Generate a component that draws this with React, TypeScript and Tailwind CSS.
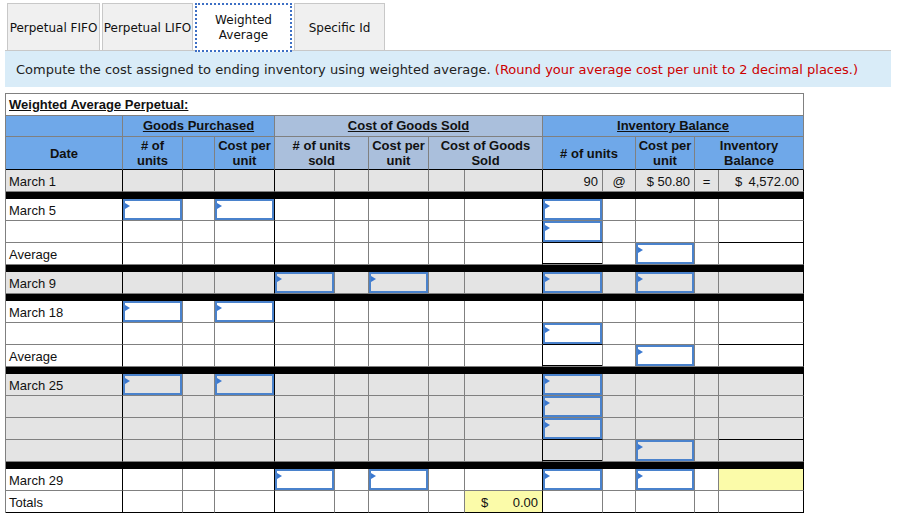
import React from 'react';

// column widths of the worksheet grid (first one sits right of the outer left border)
const widths = [117, 60, 32, 60, 60, 34, 60, 36, 78, 60, 33, 59, 24, 85];

type Spec = {
  label?: string;
  gray?: boolean;
  inputs?: number[];
  preAvg?: boolean;
  avg?: boolean;
  yellow?: number[];
  content?: Record<number, React.ReactNode>;
  last?: boolean;
};

const rightBorder = (i: number) =>
  i === 0 || i === 3 || i === 8 || i === 13 ? 'border-r-black' : 'border-r-[#808080]';

const InputBox = ({ gray }: { gray?: boolean }) => (
  <div className={`relative h-[21px] w-full border-2 border-[#4a82cc] ${gray ? 'bg-[#e4e4e4]' : 'bg-white'}`}>
    <span className="absolute left-0 top-[2px] h-0 w-0 border-y-[3px] border-y-transparent border-l-[5px] border-l-[#3a78d0]" />
  </div>
);

const cellText = 'h-[20px] leading-[22px]';

const Row = ({ s }: { s: Spec }) => (
  <tr>
    {widths.map((_, i) => {
      const yellow = s.yellow?.includes(i);
      const bg = yellow ? 'bg-[#fbfba9]' : s.gray ? 'bg-[#e4e4e4]' : 'bg-white';
      const bottom =
        s.last || (s.preAvg && (i === 9 || i === 13)) ? 'border-b-black' : 'border-b-[#808080]';
      return (
        <td
          key={i}
          className={`h-[22px] p-0 border-r border-b align-middle ${rightBorder(i)} ${bottom} ${bg}`}
        >
          {i === 0 && s.label && <div className={`${cellText} pl-[3px]`}>{s.label}</div>}
          {s.inputs?.includes(i) && <InputBox gray={s.gray} />}
          {s.avg && i === 9 && <div className="h-[20px] border-b border-black" />}
          {s.content?.[i]}
        </td>
      );
    })}
  </tr>
);

const Bar = () => (
  <tr>
    <td colSpan={14} className="h-[7px] p-0 bg-black border-r border-b border-black" />
  </tr>
);

const Tab = ({ children, active, w }: { children: React.ReactNode; active?: boolean; w: string }) => (
  <div
    className={`${w} flex items-center justify-center text-center leading-[15px] text-[12px] text-[#111] ${
      active
        ? 'relative z-10 -mb-[2px] border-2 border-dotted border-[#3d6fc4] bg-white'
        : 'border border-[#c8c8c8] border-b-0 bg-[#f0f0f0] pt-[3px]'
    }`}
  >
    {children}
  </div>
);

const App: React.FC = () => {
  const march1: Spec = {
    label: 'March 1',
    gray: true,
    content: {
      9: <div className={`${cellText} pr-[4px] text-right`}>90</div>,
      10: <div className={`${cellText} text-center`}>@</div>,
      11: <div className={`${cellText} pr-[4px] text-right`}>$ 50.80</div>,
      12: <div className={`${cellText} text-center`}>=</div>,
      13: (
        <div className={`${cellText} flex justify-between pl-[16px] pr-[4px]`}>
          <span>$</span>
          <span>4,572.00</span>
        </div>
      ),
    },
  };

  const head = 'border-b border-r border-[#808080] p-0 text-center';

  return (
    <div className="h-[518px] w-[907px] bg-white font-['DejaVu_Sans',Verdana,sans-serif]">
      {/* tabs */}
      <div className="flex h-[50px] items-stretch gap-[2px] pl-[7px] pt-[3px]">
        <Tab w="w-[93px]">Perpetual FIFO</Tab>
        <Tab w="w-[91px]">Perpetual LIFO</Tab>
        <Tab w="w-[97px]" active>
          Weighted
          <br />
          Average
        </Tab>
        <Tab w="w-[91px]">Specific Id</Tab>
      </div>

      <div className="mx-[5px] flex h-[37px] w-[886px] items-center border-t border-[#c8c8c8] bg-[#d9ecf8] pl-[11px] pt-[1px] text-[13px] text-[#222]">
        <span>
          Compute the cost assigned to ending inventory using weighted average.{' '}
          <span className="text-[#cc0000]">(Round your average cost per unit to 2 decimal places.)</span>
        </span>
      </div>

      {/* worksheet */}
      <div className="ml-[5px] mt-[6px] w-[799px] border-l border-t border-[#808080] font-['Liberation_Sans',Arial,sans-serif] text-[13px] text-[#111]">
        <table className="w-[798px] table-fixed border-separate border-spacing-0">
          <colgroup>
            {widths.map((w, i) => (
              <col key={i} style={{ width: w }} />
            ))}
          </colgroup>
          <tbody>
            <tr>
              <td
                colSpan={14}
                className="h-[22px] border-b border-r border-[#808080] p-0 pl-[3px] font-bold underline"
              >
                Weighted Average Perpetual:
              </td>
            </tr>
            <tr className="text-[13px] font-bold">
              <td className={`h-[21px] bg-[#6fa8e9] ${head}`} />
              <td colSpan={3} className={`bg-[#6fa8e9] underline ${head}`}>
                Goods Purchased
              </td>
              <td colSpan={5} className={`bg-[#aabfdc] underline ${head}`}>
                Cost of Goods Sold
              </td>
              <td colSpan={5} className={`bg-[#6fa8e9] underline ${head}`}>
                Inventory Balance
              </td>
            </tr>
            <tr className="text-[13px] font-bold leading-[15px]">
              <td className={`h-[33px] border-b-black bg-[#6fa8e9] ${head}`}>Date</td>
              <td className={`border-b-black bg-[#6fa8e9] ${head}`}>
                # of
                <br />
                units
              </td>
              <td className={`border-b-black bg-[#6fa8e9] ${head}`} />
              <td className={`border-b-black bg-[#6fa8e9] ${head}`}>
                Cost per
                <br />
                unit
              </td>
              <td colSpan={2} className={`border-b-black bg-[#aabfdc] ${head}`}>
                # of units
                <br />
                sold
              </td>
              <td className={`border-b-black bg-[#aabfdc] ${head}`}>
                Cost per
                <br />
                unit
              </td>
              <td colSpan={2} className={`border-b-black bg-[#aabfdc] ${head}`}>
                Cost of Goods
                <br />
                Sold
              </td>
              <td colSpan={2} className={`border-b-black bg-[#6fa8e9] ${head}`}>
                # of units
              </td>
              <td className={`border-b-black bg-[#6fa8e9] ${head}`}>
                Cost per
                <br />
                unit
              </td>
              <td colSpan={2} className={`border-b-black bg-[#6fa8e9] ${head}`}>
                Inventory
                <br />
                Balance
              </td>
            </tr>

            <Row s={march1} />
            <Bar />
            <Row s={{ label: 'March 5', inputs: [1, 3, 9] }} />
            <Row s={{ inputs: [9], preAvg: true }} />
            <Row s={{ label: 'Average', inputs: [11], avg: true }} />
            <Bar />
            <Row s={{ label: 'March 9', gray: true, inputs: [4, 6, 9, 11] }} />
            <Bar />
            <Row s={{ label: 'March 18', inputs: [1, 3] }} />
            <Row s={{ inputs: [9], preAvg: true }} />
            <Row s={{ label: 'Average', inputs: [11], avg: true }} />
            <Bar />
            <Row s={{ label: 'March 25', gray: true, inputs: [1, 3, 9] }} />
            <Row s={{ gray: true, inputs: [9] }} />
            <Row s={{ gray: true, inputs: [9], preAvg: true }} />
            <Row s={{ gray: true, inputs: [11], avg: true }} />
            <Bar />
            <Row s={{ label: 'March 29', inputs: [4, 6, 9, 11], yellow: [13] }} />
            <Row
              s={{
                label: 'Totals',
                last: true,
                yellow: [8],
                content: {
                  8: (
                    <div className={`${cellText} flex justify-between pl-[16px] pr-[4px]`}>
                      <span>$</span>
                      <span>0.00</span>
                    </div>
                  ),
                },
              }}
            />
          </tbody>
        </table>
      </div>
    </div>
  );
};

export default App;
